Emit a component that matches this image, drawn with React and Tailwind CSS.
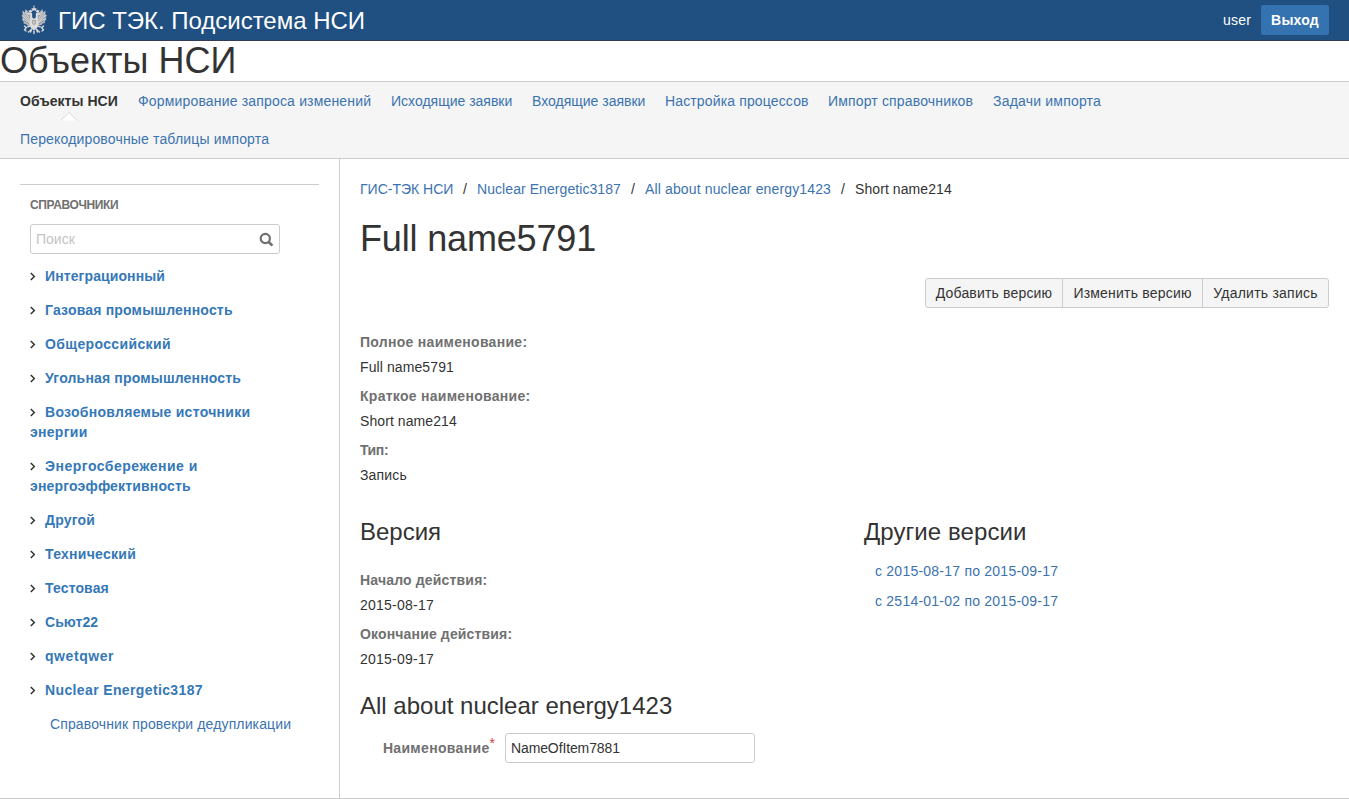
import React from 'react';

const NAV = [
  ['Объекты НСИ', 'w-[98px] font-bold text-[#333] tracking-[0.05px]'],
  ['Формирование запроса изменений', 'w-[233px] text-[#3b73af] tracking-[0.17px]'],
  ['Исходящие заявки', 'w-[121px] text-[#3b73af]'],
  ['Входящие заявки', 'w-[113px] text-[#3b73af]'],
  ['Настройка процессов', 'w-[143px] text-[#3b73af] tracking-[0.14px]'],
  ['Импорт справочников', 'w-[145px] text-[#3b73af] tracking-[0.16px]'],
  ['Задачи импорта', 'w-[108px] text-[#3b73af] tracking-[0.2px]'],
  ['Перекодировочные таблицы импорта', 'w-[249px] text-[#3b73af] tracking-[0.16px]'],
];

const CATALOGS = [
  [['Интеграционный', 'tracking-[0.1px]']],
  [['Газовая промышленность', 'tracking-[0.19px]']],
  [['Общероссийский', 'tracking-[0.36px]']],
  [['Угольная промышленность', 'tracking-[0.17px]']],
  [['Возобновляемые источники', 'tracking-[0.29px]'], ['энергии', 'tracking-[0.28px]']],
  [['Энергосбережение и', 'tracking-[0.5px]'], ['энергоэффективность', 'tracking-[0.17px]']],
  [['Другой', 'tracking-[0.17px]']],
  [['Технический', 'tracking-[0.28px]']],
  [['Тестовая', 'tracking-[0.13px]']],
  [['Сьют22', 'tracking-[0.05px]']],
  [['qwetqwer', 'tracking-[0.57px]']],
  [['Nuclear Energetic3187', 'tracking-[0.37px]']],
];

function Emblem() {
  return (
    <svg className="h-[30px] w-[26px] shrink-0" viewBox="0 0 26 30" fill="none">
      <path fill="#b9b8ba" d="M1.500 5.500 4 7.500 4.500 4 7 6.500 9.500 12l1.500 2h4l1.500-2L19 6.500 21.500 4l.5 3.500 2.500-2-.2 4 1.500.5-1 3 .7 1.500-1.700 1.500.2 2-2.500.5-1 1.500h-3L16 23h-6l-1-2.500H6L5 19l-2.500-.5.2-2L1 15l.7-1.500-1-3 1-.5z" />
      <path stroke="#56708f" strokeWidth=".7" d="M3 8l5.500 8M5.500 7l4 7.500M2 11.500l6 6M3 15.500l5 3M23 8l-5.500 8M20.500 7l-4 7.500M24 11.500l-6 6M23 15.500l-5 3" />
      <g stroke="#dedcda" strokeLinecap="round">
        <path strokeWidth=".8" d="M2.300 7.500l6 8.500M4.800 6.500l4 8M1.500 10.500l6.500 6.500M2.500 14.300l5.500 3.500M23.700 7.500l-6 8.500M21.200 6.500l-4 8M24.500 10.500 18 17M23.500 14.300 18 17.800" />
        <path strokeWidth="1.400" d="M9 21l-4 1.500L3.500 21M5 23l-1.500 2L5 26M17 21l4 1.500 1.500-1.500M21 23l1.500 2L21 26M12 22l-2.500 5M14 22l2.500 5M13 22v7M11 24l-3.500 3M15 24l3.500 3" strokeDasharray="2.500 1.400" />
        <path strokeWidth="2.200" d="M11 13.500C8.500 11.500 11.500 9.500 9.500 8.300L7.500 8.700M15 13.500c2.500-2-.5-4 1.500-5.200l2 .4" />
      </g>
      <path fill="#dedcda" d="M9 13.500h8l.5 5.500-1.500 4-3 2-3-2-1.500-4zM11 5.500l-.5-2.500 1.500.5 1-1.500 1 1.500 1.500-.5-.5 2.500zM12.500.5h1v2h-1zM8 7l-.5-2 1.300.5.700-1 .7 1 1.300-.5L11 7zM15 7l-.5-2 1.300.5.700-1 .7 1 1.300-.5L18 7z" />
      <path fill="#a5a4a7" d="M11 15h4v3.500l-2 1.800-2-1.800z" />
      <path fill="#e6e4e2" d="M12.300 16h1.200v2.500h-1.200z" />
    </svg>
  );
}

function Chevron() {
  return (
    <svg className="mr-[8px] inline-block h-[9px] w-[7px] align-[0.5px]" viewBox="0 0 7 9" fill="none">
      <path d="M.8 1 4.300 4.500.8 8" stroke="#333" strokeWidth="1.500" />
    </svg>
  );
}

function Field({ label, value, labelClass, valueClass }) {
  return (
    <div className="flex h-[54px] flex-col">
      <dt className={`mb-[5px] h-5 font-bold text-[#707070] ${labelClass}`}>{label}</dt>
      <dd className={`h-5 ${valueClass}`}>{value}</dd>
    </div>
  );
}

export default function App() {
  return (
    <div className="flex h-[799px] w-[1349px] flex-col overflow-hidden bg-white font-['Liberation_Sans',Arial,sans-serif] text-[14px] leading-5 text-[#333]">
      <header className="flex h-[41px] shrink-0 items-center border-b border-[#2e3d54] bg-[#205081] pr-5 pl-[21px] text-white">
        <Emblem />
        <span className="ml-[11px] pt-[2px] text-[24px] leading-[38px] tracking-[-0.02px]">ГИС ТЭК. Подсистема НСИ</span>
        <span className="mr-[10px] ml-auto tracking-[0.2px]">user</span>
        <button className="h-[30px] w-[68px] rounded-[3px] bg-[#3572b0] font-bold tracking-[0.2px]">Выход</button>
      </header>
      <h1 className="h-[40px] shrink-0 text-[36px] leading-[40px]">Объекты НСИ</h1>
      <nav className="flex h-[78px] shrink-0 flex-wrap content-start gap-x-5 border-y border-[#ccc] bg-[#f5f5f5] px-5">
        {NAV.map(([label, cls], i) => (
          <a key={label} className={`relative flex h-[38px] items-center whitespace-nowrap ${cls}`}>
            {label}
            {i === 0 && (
              <svg className="absolute top-[30px] left-[41px] h-[9px] w-[16px]" viewBox="0 0 16 9">
                <path d="M0 8.500 8 .8l8 7.700z" fill="#fff" />
                <path d="M0 8.300 8 .6l8 7.700" fill="none" stroke="#d8d8d8" />
              </svg>
            )}
          </a>
        ))}
      </nav>
      <div className="flex min-h-0 flex-1 border-b border-[#ccc]">
        <aside className="w-[340px] shrink-0 border-r border-[#ccc] px-5 pt-[25px]">
          <div className="border-t border-[#ccc] pt-[10px] pl-[10px]">
            <h2 className="h-5 text-[12px] font-bold tracking-[-0.37px] text-[#707070]">СПРАВОЧНИКИ</h2>
            <div className="mt-[9px] flex h-[30px] w-[250px] items-center justify-between rounded-[3px] border border-[#ccc] pr-[5px] pl-[5px] text-[#c4c4c4]">
              Поиск
              <svg className="h-[15px] w-[15px]" viewBox="0 0 15 15" fill="none" stroke="#707070">
                <circle cx="6.300" cy="6.500" r="4.600" strokeWidth="2.200" />
                <path d="M9.700 10l3.700 3.700" strokeWidth="2.600" />
              </svg>
            </div>
            <ul className="mt-[12px] flex flex-col gap-[14px] font-bold text-[#3578b8]">
              {CATALOGS.map((lines) => (
                <li key={lines[0][0]}>
                  {lines.map(([text, tracking], i) => (
                    <div key={text} className={`h-5 whitespace-nowrap ${tracking}`}>
                      {i === 0 && <Chevron />}
                      {text}
                    </div>
                  ))}
                </li>
              ))}
              <li className="pl-5 font-normal tracking-[0.13px] whitespace-nowrap text-[#3b73af]">Справочник провекри дедупликации</li>
            </ul>
          </div>
        </aside>
        <main className="flex min-w-0 flex-1 flex-col px-5 pt-5">
          <div className="flex h-5 whitespace-nowrap text-[#3b73af]">
            <a className="w-[93px]">ГИС-ТЭК НСИ</a>
            <span className="w-6 text-center text-[#333]">/</span>
            <a className="w-[144px] tracking-[0.07px]">Nuclear Energetic3187</a>
            <span className="w-6 text-center text-[#333]">/</span>
            <a className="w-[186px] tracking-[0.14px]">All about nuclear energy1423</a>
            <span className="w-6 text-center text-[#333]">/</span>
            <span className="tracking-[0.08px] text-[#333]">Short name214</span>
          </div>
          <h1 className="mt-[20px] h-[40px] text-[36px] leading-[40px] tracking-[-0.16px]">Full name5791</h1>
          <div className="mt-[19px] flex h-[30px] self-end overflow-hidden rounded-[3px] border border-[#ccc] bg-[#f5f5f5]">
            <button className="w-[137px] border-r border-[#ccc] tracking-[0.17px]">Добавить версию</button>
            <button className="w-[140px] border-r border-[#ccc] tracking-[0.2px]">Изменить версию</button>
            <button className="w-[125px] tracking-[0.23px]">Удалить запись</button>
          </div>
          <dl className="mt-6">
            <Field label="Полное наименование:" value="Full name5791" labelClass="tracking-[0.29px]" valueClass="tracking-[0.1px]" />
            <Field label="Краткое наименование:" value="Short name214" labelClass="tracking-[0.28px]" valueClass="tracking-[0.08px]" />
            <Field label="Тип:" value="Запись" labelClass="tracking-[-0.4px]" valueClass="tracking-[0.15px]" />
          </dl>
          <div className="mt-[23px] flex">
            <section className="w-[504px]">
              <h2 className="h-[30px] text-[24px] leading-[30px]">Версия</h2>
              <dl className="mt-[23px]">
                <Field label="Начало действия:" value="2015-08-17" labelClass="tracking-[0.17px]" valueClass="tracking-[0.23px]" />
                <Field label="Окончание действия:" value="2015-09-17" labelClass="tracking-[0.15px]" valueClass="tracking-[0.23px]" />
              </dl>
            </section>
            <section>
              <h2 className="h-[30px] text-[24px] leading-[30px] tracking-[0.07px]">Другие версии</h2>
              <div className="mt-[14px] flex flex-col gap-[10px] pl-[11px] tracking-[0.23px] text-[#3b73af]">
                <a>с 2015-08-17 по 2015-09-17</a>
                <a>с 2514-01-02 по 2015-09-17</a>
              </div>
            </section>
          </div>
          <h2 className="mt-[13px] h-[30px] text-[24px] leading-[30px]">All about nuclear energy1423</h2>
          <div className="mt-[12px] flex h-[30px] items-center">
            <label className="flex w-[135px] justify-end font-bold tracking-[0.33px] text-[#707070]">
              Наименование<span className="-mt-[5px] font-normal tracking-normal text-[#d04437]">*</span>
            </label>
            <div className="ml-[10px] flex h-[30px] w-[250px] items-center rounded-[3px] border border-[#ccc] pl-[5px] tracking-[-0.12px]">NameOfItem7881</div>
          </div>
        </main>
      </div>
    </div>
  );
}
